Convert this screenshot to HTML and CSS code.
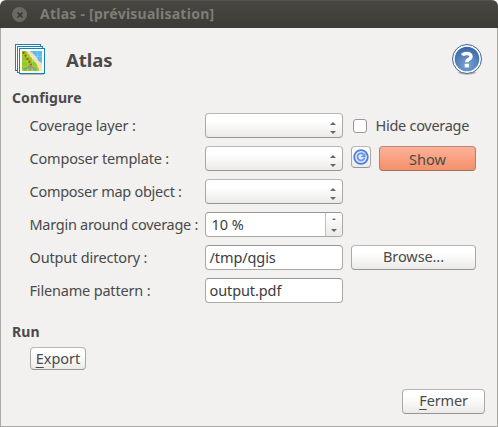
FILE: index.html
```html
<!DOCTYPE html>
<html lang="fr">
<head>
<meta charset="utf-8">
<title>Atlas</title>
<link rel="stylesheet" href="styles.css">
</head>
<body>
<div class="window">
  <header class="titlebar">
    <span class="close"><svg width="8" height="8" viewBox="0 0 8 8"><path d="M1.5 1.5l5 5M6.5 1.5l-5 5" stroke="#353430" stroke-width="1.5"/></svg></span>
    <span class="caption">Atlas - [prévisualisation]</span>
  </header>
  <main class="content">
    <div class="heading">
      <svg class="logo" width="30" height="31" viewBox="0 0 30 31">
        <path d="M5 30.500h24" stroke="#b8b8b6"/>
        <g fill="#fff" stroke="#1583b5">
          <rect x=".5" y=".5" width="25" height="26"/>
          <rect x="2.500" y="2.500" width="25" height="26"/>
          <rect x="4.500" y="4.500" width="25" height="25"/>
        </g>
        <path d="M7 7h20v20H7z" fill="#8fcb22"/>
        <path d="M11 7h16v20h-3q-1-7-6-11z" fill="#f3e2b8"/>
        <path d="M15 7h12v12q-4-1-5-5-2-3-7-7z" fill="#5dbbed"/>
        <path d="M7 12.500h20M7 17.500h20M7 22.500h20M12.500 7v20M17.500 7v20M22.500 7v20" stroke="#fff" stroke-opacity=".16"/>
        <path d="M9 26l6-4.500 6 4.500M15 21.500v4" fill="none" stroke="#92998a" stroke-width="1.600"/>
        <path d="M8 8l4 6 4.500 7" fill="none" stroke="#df3518" stroke-width="2" stroke-dasharray="2 1.600"/>
      </svg>
      <h1>Atlas</h1>
      <svg class="help" width="32" height="32" viewBox="0 0 32 32">
        <defs><radialGradient id="hg" cx=".5" cy=".75" r=".7"><stop offset="0" stop-color="#7ba4d5"/><stop offset="1" stop-color="#3d69a7"/></radialGradient></defs>
        <ellipse cx="16" cy="28.500" rx="9" ry="2.200" fill="#b5b5b5"/>
        <circle cx="16" cy="15" r="14.500" fill="#fff" stroke="#3c649c"/>
        <circle cx="16" cy="15" r="12.300" fill="url(#hg)"/>
        <path d="M11.500 11.300Q12.500 9.500 15.500 9.500q4.500 0 4.500 3 0 1.800-2.300 2.900-2 1-2 2.800" fill="none" stroke="#fff" stroke-width="3.400"/>
        <rect x="13.700" y="19.800" width="4.200" height="3.600" fill="#fff"/>
      </svg>
    </div>
    <h2>Configure</h2>
    <div class="form">
      <label class="l1">Coverage layer :</label>
      <div class="field combo"><i class="up"></i><i class="down"></i></div>
      <div class="extra check"><span class="box"></span><span class="hide">Hide coverage</span></div>

      <label class="l2">Composer template :</label>
      <div class="field combo"><i class="up"></i><i class="down"></i></div>
      <div class="extra">
        <button class="refresh"><svg width="16" height="16" viewBox="0 0 16 16"><circle cx="8" cy="8" r="6.800" fill="#e4edfc" stroke="#4b7fdf" stroke-width="1.800"/><path d="M10.500 5.200A3.600 3.600 0 1 0 11.500 9" fill="none" stroke="#6795e8" stroke-width="1.800"/><path d="M7.500 8L12.500 3.800V8.500z" fill="#6795e8"/></svg></button>
        <button class="show">Show</button>
      </div>

      <label class="l3">Composer map object :</label>
      <div class="field combo"><i class="up"></i><i class="down"></i></div>
      <div></div>

      <label class="l4">Margin around coverage :</label>
      <div class="field spin"><span class="percent">10 %</span><div class="stepper"><i class="up"></i><i class="down"></i></div></div>
      <div></div>

      <label class="l5">Output directory :</label>
      <div class="field input"><span class="dir">/tmp/qgis</span></div>
      <div class="extra"><button class="browse">Browse...</button></div>

      <label class="l6">Filename pattern :</label>
      <div class="field input"><span class="file">output.pdf</span></div>
      <div></div>
    </div>
    <h2 class="run">Run</h2>
    <button class="export"><span><u>E</u>xport</span></button>
    <div class="footer"><button class="fermer"><span><u>F</u>ermer</span></button></div>
  </main>
</div>
</body>
</html>
```
FILE: styles.css
```css
* { box-sizing: border-box; }
body {
  margin: 0;
  background: #fff;
  color: #4a4a4a;
  font: 14.5px/20px "Noto Sans", "Open Sans", sans-serif;
  white-space: nowrap;
}
.window {
  width: 498px;
  height: 427px;
  border-radius: 6px 6px 0 0;
  overflow: hidden;
  background: #f2f1f0;
}
.titlebar {
  height: 28px;
  padding-left: 12px;
  display: flex;
  align-items: center;
  background: linear-gradient(#484741, #3c3b37);
  border-top: 1px solid #55534d;
}
.close {
  width: 15px;
  height: 15px;
  border-radius: 50%;
  background: #6b6964;
  display: flex;
  align-items: center;
  justify-content: center;
}
.caption {
  margin-left: 13px;
  color: #807d78;
  font-weight: bold;
  font-size: 14px;
  letter-spacing: 0.25px;
  position: relative;
  top: -1px;
}
.content {
  height: 399px;
  border: 1px solid #aaa8a2;
  border-top: 0;
  padding: 16px 15px 0 11px;
}
.heading { display: flex; height: 44px; }
.logo { margin-left: 3px; }
.heading h1 {
  margin: 3px 0 0 21px;
  font-size: 18.5px;
  line-height: 26px;
  letter-spacing: -0.05px;
}
.help { margin-left: auto; margin-right: -1px; }
h2 {
  margin: 0;
  font-size: 14px;
  line-height: 20px;
  letter-spacing: 0.1px;
}
.form {
  margin: 5px 0 0 18px;
  display: grid;
  grid-template-columns: 175px 138px 125px;
  grid-auto-rows: 25px;
  row-gap: 8px;
}
.form label { line-height: 25px; margin-left: -0.5px; letter-spacing: -0.18px; }
.form .l3 { letter-spacing: -0.27px; }
.form .l4 { letter-spacing: -0.28px; }
.field {
  height: 25px;
  border: 1px solid #aaa8a5;
  border-color: #b9b7b4 #aaa8a5 #989693;
  border-radius: 4px;
  background: #fff;
  display: flex;
}
.combo {
  background: linear-gradient(#fff 30%, #ebeae8);
  flex-direction: column;
  align-items: flex-end;
  padding: 8px 6px 0 0;
}
.up, .down {
  width: 6px;
  height: 3px;
  background: #666;
}
.up { clip-path: polygon(50% 0, 100% 100%, 0 100%); }
.down { clip-path: polygon(0 0, 100% 0, 50% 100%); }
.combo .down { margin-top: 6px; }
.input, .spin { color: #3c3c3c; line-height: 23px; padding-left: 4px; border-color: #989693 #aaa8a5 #aaa8a5; }
.input { padding-left: 3.5px; letter-spacing: -0.1px; }
.spin { padding-left: 5.5px; }
.stepper {
  margin-left: auto;
  width: 17px;
  border-left: 1px solid #c2c0bd;
  border-radius: 0 3px 3px 0;
  background: linear-gradient(#fff, #ebeae8);
  display: flex;
  flex-direction: column;
  align-items: center;
  padding-top: 5px;
}
.stepper .up { width: 4px; height: 2px; }
.stepper .down { margin-top: 9px; }
.extra { display: flex; margin-left: 8px; width: 125px; }
.check { align-items: center; padding-left: 2px; }
.box {
  width: 14px;
  height: 14px;
  border: 1px solid #999794;
  border-radius: 3px;
  background: #fff;
}
.hide { margin-left: 8.5px; letter-spacing: -0.28px; line-height: 22px; padding-bottom: 2px; }
button {
  margin: 0;
  padding: 0;
  font: inherit;
  color: inherit;
  border: 1px solid #aaa8a5;
  border-color: #b9b7b4 #aaa8a5 #989693;
  border-radius: 4px;
  background: linear-gradient(#fff 30%, #ebeae8);
}
button u { text-underline-offset: 3px; text-decoration-skip-ink: none; text-decoration-thickness: 1px; }
.refresh { width: 20px; height: 22px; display: flex; align-items: center; justify-content: center; }
.show {
  width: 97px;
  height: 25px;
  margin-left: 8px;
  border-color: #b98977 #a98475 #987567;
  background: linear-gradient(#fdb198, #f4906a);
}
.browse { width: 125px; height: 25px; letter-spacing: -0.1px; line-height: 21px; padding-bottom: 2px; }
.run { margin-top: 19px; }
.export { display: block; width: 56px; height: 23px; margin: 5px 0 0 18px; line-height: 21px; }
.footer { display: flex; justify-content: flex-end; margin-top: 19px; margin-right: -3px; }
.fermer { width: 83px; height: 25px; letter-spacing: -0.15px; line-height: 21px; padding-bottom: 2px; }
```
